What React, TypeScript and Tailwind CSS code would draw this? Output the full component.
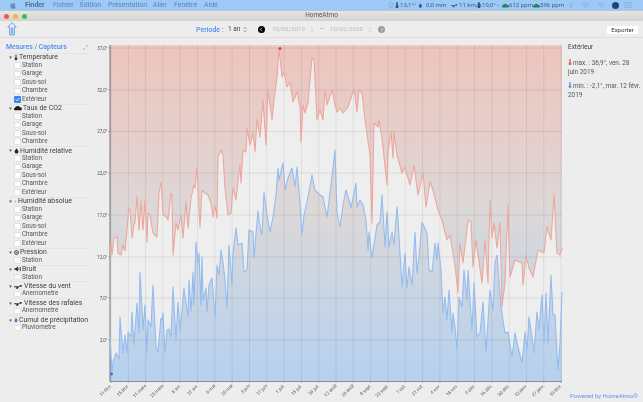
import React from 'react';

const RED = '110,255 111,243 112,255 114,238 117,237 118,253 121,255 123,245 125,251 129,208 130,210 132,238 134,225 135,222 137,196 139,230 141,201 143,230 145,200 147,242 148,213 150,215 153,233 157,237 159,193 161,182 163,215 167,217 168,220 171,193 172,195 173,255 176,223 178,230 181,215 183,238 186,202 188,228 191,198 194,185 195,188 197,167 200,227 202,190 205,193 208,195 211,203 213,217 215,205 217,218 218,157 221,150 223,155 225,188 228,215 231,213 233,188 236,200 239,172 240,165 241,183 243,150 246,152 247,128 250,145 253,133 255,152 257,119 260,137 263,100 266,145 268,90 272,120 274,100 277,77 279,49 282,77 284,72 287,87 290,82 293,102 297,92 300,107 301,142 303,105 305,113 308,103 312,58 314,60 317,120 320,110 323,120 325,90 327,105 332,90 335,105 337,112 340,108 343,113 348,107 352,95 354,89 357,112 359,90 362,93 365,120 370,155 372,223 374,123 378,127 379,120 382,138 387,185 388,152 391,132 393,158 394,132 397,155 402,173 405,167 410,185 414,165 418,195 423,173 426,207 430,182 433,190 438,210 442,220 447,240 450,235 455,265 458,293 460,243 463,263 468,220 471,222 473,267 476,240 482,283 485,240 488,283 490,200 492,238 494,223 497,248 500,222 502,307 505,283 508,205 510,277 515,260 522,263 523,285 526,255 529,268 533,277 538,250 544,253 547,227 551,240 554,194 557,253 560,255 562,248';

const BLUE = '110,337 112,373 113,362 116,353 119,359 120,317 123,353 125,335 127,353 128,332 131,337 132,312 134,345 137,303 139,333 140,272 143,330 145,305 147,353 148,320 151,327 153,285 156,347 158,352 161,318 162,320 163,313 165,353 167,330 169,329 171,337 173,287 176,340 178,302 180,330 183,300 184,288 188,317 189,280 191,312 193,272 194,305 196,242 198,263 199,253 201,305 202,257 203,300 206,288 207,312 209,285 212,278 215,318 217,265 219,275 221,250 223,263 225,280 227,308 229,245 232,285 233,253 236,228 238,245 242,243 244,272 247,270 249,230 253,232 254,258 258,211 260,227 262,235 264,192 267,215 270,232 273,217 276,195 278,168 279,180 283,163 285,190 288,178 292,168 295,187 297,167 300,203 302,235 304,215 307,202 312,175 315,190 320,195 323,197 327,217 331,185 335,150 337,213 340,227 343,205 346,190 349,200 351,208 356,183 357,207 360,200 363,205 366,220 368,250 369,232 372,258 377,225 380,222 382,195 385,247 387,212 389,247 392,232 394,245 397,207 398,220 402,287 405,253 407,288 409,267 412,285 415,232 417,273 419,258 422,222 427,233 429,270 432,272 435,243 437,260 438,243 441,270 443,313 445,297 447,320 449,290 452,332 453,313 455,327 457,350 459,297 462,307 464,270 467,300 468,270 472,330 474,283 477,337 480,333 483,302 486,352 490,290 493,310 495,263 497,255 501,307 505,333 508,332 512,357 515,333 518,347 522,363 525,332 527,350 529,317 532,337 534,353 537,312 539,330 542,295 544,343 546,293 548,343 551,275 553,315 555,315 557,353 558,370 560,342 562,292';

const betweenArea = RED + ' ' + BLUE.split(' ').reverse().join(' ');

const Y_TICKS: [number, string][] = [
  [48, '37,0°'], [90, '32,0°'], [131.5, '27,0°'], [173, '22,0°'],
  [215, '17,0°'], [257, '12,0°'], [298, '7,0°'], [340, '2,0°'],
];

const X_LABELS = [
  '11 févr.', '25 févr.', '11 mars', '25 mars', '8 avr.', '22 avr.', '6 mai', '20 mai', '3 juin',
  '17 juin', '1 juil.', '15 juil.', '29 juil.', '12 août', '26 août', '9 sept.', '23 sept.', '7 oct.',
  '21 oct.', '4 nov.', '18 nov.', '2 déc.', '16 déc.', '30 déc.', '13 janv.', '27 janv.', '10 févr.',
];

type IconName = 'thermo' | 'cloud' | 'drop' | 'vapor' | 'gauge' | 'sound' | 'wind' | 'rain';

const GROUPS: { name: string; icon: IconName; items: string[] }[] = [
  { name: 'Temperature', icon: 'thermo', items: ['Station', 'Garage', 'Sous-sol', 'Chambre', 'Extérieur'] },
  { name: 'Taux de CO2', icon: 'cloud', items: ['Station', 'Garage', 'Sous-sol', 'Chambre'] },
  { name: 'Humidité relative', icon: 'drop', items: ['Station', 'Garage', 'Sous-sol', 'Chambre', 'Extérieur'] },
  { name: 'Humidité absolue', icon: 'vapor', items: ['Station', 'Garage', 'Sous-sol', 'Chambre', 'Extérieur'] },
  { name: 'Pression', icon: 'gauge', items: ['Station'] },
  { name: 'Bruit', icon: 'sound', items: ['Station'] },
  { name: 'Vitesse du vent', icon: 'wind', items: ['Anemometre'] },
  { name: 'Vitesse des rafales', icon: 'wind', items: ['Anemometre'] },
  { name: 'Cumul de précipitation', icon: 'rain', items: ['Pluviometre'] },
];

const GroupIcon = ({ name }: { name: IconName }) => {
  if (name === 'thermo') {
    return (
      <svg viewBox="0 0 6 9" className="w-[4px] h-[7px] shrink-0 mr-[1px]">
        <rect x="2" y="0.5" width="2" height="5" rx="1" fill="none" stroke="#333" strokeWidth="0.8" />
        <circle cx="3" cy="6.6" r="2" fill="#333" />
      </svg>
    );
  }
  if (name === 'cloud') {
    return (
      <svg viewBox="0 0 12 8" className="w-[8px] h-[6px] shrink-0 mr-[1px]">
        <path d="M1 7.5a2 2 0 0 1 .6-3.8A3 3 0 0 1 4 1.5 4 4 0 0 1 9 3a2.4 2.4 0 0 1 1.5 4.5z" fill="#1c1c1c" />
      </svg>
    );
  }
  if (name === 'drop') {
    return (
      <svg viewBox="0 0 8 9" className="w-[5px] h-[6px] shrink-0 mr-[1px]">
        <path d="M4 0C3 2 1 3.500 1 5.500a3 3 0 0 0 6 0C7 3.500 5 2 4 0z" fill="#222" />
      </svg>
    );
  }
  if (name === 'vapor') {
    return (
      <svg viewBox="0 0 6 9" className="w-[3px] h-[6px] shrink-0 mr-[1px]">
        <path d="M3 0.500 1 4h2L2 8l3-5H3.200z" fill="#5ec3ea" />
      </svg>
    );
  }
  if (name === 'gauge') {
    return (
      <svg viewBox="0 0 8 8" className="w-[5px] h-[5px] shrink-0 mr-[1px]">
        <circle cx="4" cy="4" r="3.100" fill="none" stroke="#333" strokeWidth="1.500" />
        <circle cx="4" cy="4" r="1" fill="#333" />
      </svg>
    );
  }
  if (name === 'sound') {
    return (
      <svg viewBox="0 0 10 8" className="w-[7px] h-[6px] shrink-0 mr-[1px]">
        <path d="M0.500 3h2l3-2.500v7L2.500 5h-2z" fill="#222" />
        <rect x="6.500" y="2" width="1" height="4" fill="#222" />
        <rect x="8.500" y="1" width="1" height="6" fill="#222" />
      </svg>
    );
  }
  if (name === 'wind') {
    return (
      <svg viewBox="0 0 14 7" className="w-[9px] h-[5px] shrink-0 mr-[1px]">
        <path d="M0 3h9V1h3v3H8l-2 3H3l1-2.500H0z" fill="#333" />
      </svg>
    );
  }
  return (
    <svg viewBox="0 0 8 10" className="w-[4px] h-[6px] shrink-0 mr-[1px]">
      <path d="M4 0C3 2.500 1 4 1 6.500a3 3 0 0 0 6 0C7 4 5 2.500 4 0z" fill="#2f7fe0" />
    </svg>
  );
};

const Stepper = ({ faded }: { faded?: boolean }) => (
  <svg viewBox="0 0 5 9" className="w-[4px] h-[7px]">
    <path d="M1 3.500 2.500 1.500 4 3.500M1 5.500 2.500 7.500 4 5.500" fill="none" stroke={faded ? '#c2c2c2' : '#666'} strokeWidth="0.7" />
  </svg>
);

const Therm = ({ color }: { color: string }) => (
  <svg viewBox="0 0 6 10" className="inline-block w-[4px] h-[8px] mr-[1px] align-[-1px]">
    <rect x="1.900" y="0.500" width="2.200" height="6" rx="1.100" fill={color} />
    <circle cx="3" cy="7.500" r="2.200" fill={color} />
  </svg>
);

const Cloud = () => (
  <svg viewBox="0 0 12 8" className="w-[7px] h-[5px] shrink-0">
    <path d="M1 7.500a2 2 0 0 1 .6-3.800A3 3 0 0 1 4 1.500 4 4 0 0 1 9 3a2.400 2.400 0 0 1 1.500 4.500z" fill="#1f8a4c" />
  </svg>
);

const Chart = () => (
  <svg viewBox="90 38 476 364" className="w-[476px] h-[364px] shrink-0">
    <defs>
      <linearGradient id="bg" x1="0" y1="0" x2="0" y2="1">
        <stop offset="0" stopColor="#efc4bd" />
        <stop offset="0.5" stopColor="#dcd8d8" />
        <stop offset="1" stopColor="#b5d1ef" />
      </linearGradient>
    </defs>
    <rect x="110" y="45" width="452" height="336" fill="url(#bg)" />
    <rect x="110" y="45" width="452" height="3" fill="#eec8c2" />
    <polygon points={betweenArea} fill="#eeeeee" />
    {Y_TICKS.map(([y, label]) => (
      <g key={label}>
        <line x1="110" x2="562" y1={y} y2={y} stroke="#000" strokeOpacity="0.1" strokeWidth="0.8" />
        <line x1="108" x2="110" y1={y} y2={y} stroke="#888" strokeWidth="0.5" />
        <text x="107.500" y={y + 1.500} textAnchor="end" fontSize="4.600" fill="#555" fontFamily="Roboto, sans-serif">{label}</text>
      </g>
    ))}
    {X_LABELS.map((label, i) => {
      const x = 111 + i * 17.31;
      return (
        <g key={label}>
          <line x1={x} x2={x} y1="45" y2="381" stroke="#000" strokeOpacity="0.09" strokeWidth="0.8" />
          <line x1={x} x2={x} y1="381" y2="383" stroke="#777" strokeWidth="0.5" />
          <text
            x={x + 1}
            y="386"
            textAnchor="end"
            fontSize="4.600"
            fill="#555"
            fontFamily="Roboto, sans-serif"
            transform={`rotate(-45 ${x + 1} 386)`}
          >
            {label}
          </text>
        </g>
      );
    })}
    <line x1="110" x2="110" y1="45" y2="381.500" stroke="#666" strokeWidth="0.9" />
    <line x1="110" x2="562" y1="381.500" y2="381.500" stroke="#777" strokeWidth="0.8" />
    <polyline points={RED} fill="none" stroke="#eda79d" strokeWidth="1.100" strokeLinejoin="round" />
    <polyline points={BLUE} fill="none" stroke="#93bcf0" strokeWidth="1.100" strokeLinejoin="round" />
    <circle cx="280" cy="48.500" r="1.500" fill="#e8413a" />
    <circle cx="111.500" cy="374" r="1.500" fill="#2a7de8" />
  </svg>
);

export default function App() {
  return (
    <div className="w-[643px] h-[402px] overflow-hidden flex flex-col bg-[#ededed] text-[#444] blur-[0.3px] font-['Roboto',sans-serif]">
      {/* Menu bar */}
      <div className="h-[10px] shrink-0 bg-[#9dc9f6] flex items-center text-[6.900px] text-[#5e83ae] relative whitespace-nowrap">
        <svg viewBox="0 0 10 12" className="w-[6px] h-[7px] ml-[10px] mr-[9px]">
          <path d="M7 0.500C6 .6 5 1.500 5.200 2.700 6.300 2.700 7.200 1.700 7 .5zM5 3.200C4 3.200 3.500 2.600 2.600 2.600 1.300 2.700 .3 4 .3 6c0 2.700 1.800 5.500 3 5.500.8 0 1-.5 1.900-.5s1.100.5 1.900.5c1 0 2-1.700 2.500-3.100C8 7.700 7.600 5 9.300 4c-.6-1-1.600-1.400-2.400-1.400C6 2.600 5.500 3.200 5 3.200z" fill="#6c8eb6" />
        </svg>
        <span className="font-bold text-[#4f7097] w-[28px]">Finder</span>
        <span className="w-[27px]">Fichier</span>
        <span className="w-[28px]">Édition</span>
        <span className="w-[45px]">Présentation</span>
        <span className="w-[21px]">Aller</span>
        <span className="w-[30px]">Fenêtre</span>
        <span>Aide</span>
        <div className="ml-auto flex items-center h-full pr-[11px] text-[6.100px] text-[#3f5f86]">
          <svg viewBox="0 0 8 10" className="w-[6px] h-[8px] mr-[1px]">
            <path d="M4 .5 7 4H5.500v5h-3V4H1z" fill="none" stroke="#7ba6d6" strokeWidth="0.800" />
          </svg>
          <Therm color="#2c4a6d" />
          <span className="w-[13px]">13,1°</span>
          <span className="w-[5px] text-[#c9445a] text-[4px]">↗</span>
          <svg viewBox="0 0 8 8" className="w-[6px] h-[5px] mr-[2px]">
            <path d="M3 0C2 2 .5 3.500.5 5a2.500 2.500 0 0 0 5 0C5.500 3.500 4 2 3 0z" fill="#2c5fa8" />
          </svg>
          <span className="w-[25px]">0,0 mm</span>
          <svg viewBox="0 0 14 7" className="w-[7px] h-[5px] mr-[1px] shrink-0">
            <path d="M0 3h9V1h3v3H8l-2 3H3l1-2.500H0z" fill="#33517a" />
          </svg>
          <span className="w-[18px]">11 km/h</span>
          <Therm color="#2c4a6d" />
          <span className="w-[14px]">19,0°</span>
          <span className="w-[6px] text-[4px]">→</span>
          <Cloud />
          <span className="w-[24px]">612 ppm</span>
          <Cloud />
          <span className="w-[22px] mr-[6px]">596 ppm</span>
          <svg viewBox="0 0 8 10" className="w-[6px] h-[7px] mr-[7px]">
            <path d="M1 3 6 7 4 9V1L6 3 1 7" fill="none" stroke="#86aad3" strokeWidth="0.800" />
          </svg>
          <svg viewBox="0 0 12 9" className="w-[9px] h-[7px] mr-[8px]">
            <path d="M.5 3a8 8 0 0 1 11 0M2.500 5a5 5 0 0 1 7 0M4.500 7a2.200 2.200 0 0 1 3 0" fill="none" stroke="#86aad3" strokeWidth="1" />
          </svg>
          <svg viewBox="0 0 10 10" className="w-[6px] h-[6px] mr-[8px]">
            <circle cx="4" cy="4" r="3" fill="none" stroke="#86aad3" strokeWidth="1.200" />
            <path d="M6.500 6.500 9.500 9.500" stroke="#86aad3" strokeWidth="1.200" />
          </svg>
          <div className="w-[7px] h-[7px] rounded-full bg-[#23407e] mr-[5px]" />
          <svg viewBox="0 0 10 8" className="w-[8px] h-[6px]">
            <path d="M0 1h10M0 4h10M0 7h10" stroke="#86aad3" strokeWidth="1" />
          </svg>
        </div>
      </div>

      {/* Title bar */}
      <div className="h-[11px] shrink-0 bg-gradient-to-b from-[#e6e6e6] to-[#d2d2d2] flex items-center relative pl-[4px] gap-[4px] border-t border-[#b9c4cf]">
        <div className="w-[5px] h-[5px] rounded-full bg-[#f0584f]" />
        <div className="w-[5px] h-[5px] rounded-full bg-[#f5b82e]" />
        <div className="w-[5px] h-[5px] rounded-full bg-[#38c146]" />
        <span className="absolute left-0 right-0 text-center text-[6.400px] text-[#555]">HomeAtmo</span>
      </div>

      {/* Toolbar */}
      <div className="h-[17px] shrink-0 flex items-center border-b border-[#dedede] relative text-[6.500px] whitespace-nowrap">
        <svg viewBox="0 0 10 14" className="w-[10px] h-[14px] ml-[7px] mr-[179px]">
          <path d="M5 .6 9.300 5H7.400v8H2.600V5H.7zM4.300 5.500v6.500M5.700 5.500v6.500" fill="none" stroke="#5b9be8" strokeWidth="0.900" />
        </svg>
        <span className="text-[#4f8df0] font-medium text-[7px] w-[32px] mt-[2px]">Periode :</span>
        <span className="w-[15px] text-[#444] mt-[2px]">1 an</span>
        <Stepper />
        <div className="w-[7px] h-[7px] rounded-full bg-black flex items-center justify-center ml-[11px] mr-[7px] mt-[1px]">
          <svg viewBox="0 0 6 6" className="w-[5px] h-[5px]">
            <path d="M3.500 1 1.500 3l2 2" fill="none" stroke="#fff" strokeWidth="1" />
          </svg>
        </div>
        <span className="w-[38px] text-[#b9b9b9] text-[6.200px] mt-[2px]">10/02/2019</span>
        <Stepper faded />
        <span className="w-[16px] text-center text-[#999] mt-[2px]">–</span>
        <span className="w-[38px] text-[#b9b9b9] text-[6.200px] mt-[2px]">10/02/2020</span>
        <Stepper faded />
        <div className="w-[7px] h-[7px] rounded-full bg-[#9c9c9c] flex items-center justify-center ml-[6px] mt-[1px]">
          <svg viewBox="0 0 6 6" className="w-[5px] h-[5px]">
            <path d="M2.500 1l2 2-2 2" fill="none" stroke="#eee" strokeWidth="1" />
          </svg>
        </div>
        <button className="ml-auto mr-[5px] w-[31px] h-[8px] bg-white rounded-[1px] text-[6px] leading-[8px] text-[#333] text-center mt-[1px]">Exporter</button>
      </div>

      {/* Body */}
      <div className="flex-1 flex min-h-0">
        <aside className="w-[90px] shrink-0 pt-[4px]">
          <div className="h-[10.800px] pl-[6px] pr-[2px] flex items-center justify-between">
            <span className="text-[#4f8df0] font-medium text-[6.900px] whitespace-nowrap">Mesures / Capteurs</span>
            <svg viewBox="0 0 8 8" className="w-[5px] h-[5px]">
              <path d="M1 5v2h2M1 7l2-2M7 3V1H5M7 1 5 3" fill="none" stroke="#888" strokeWidth="0.600" />
            </svg>
          </div>
          {GROUPS.map(group => (
            <div key={group.name}>
              <div className="h-[8.470px] ml-[9px] mr-[2px] border-t border-[#e4e4e4] flex items-center text-[6.900px] text-[#3d3d3d] whitespace-nowrap">
                <svg viewBox="0 0 6 6" className="w-[3px] h-[3px] mr-[2px] shrink-0">
                  <path d="M0 1h6L3 6z" fill="#666" />
                </svg>
                <GroupIcon name={group.icon} />
                <span>{group.name}</span>
              </div>
              {group.items.map(item => {
                const checked = group.name === 'Temperature' && item === 'Extérieur';
                return (
                  <div key={item} className="h-[8.470px] pl-[14px] flex items-center text-[6.300px] text-[#555]">
                    {checked ? (
                      <div className="w-[6.500px] h-[6.500px] rounded-[1px] bg-[#3f88ee] flex items-center justify-center mr-[1.500px]">
                        <svg viewBox="0 0 6 6" className="w-[5px] h-[5px]">
                          <path d="M1 3l1.400 1.500L5 1.500" fill="none" stroke="#fff" strokeWidth="1" />
                        </svg>
                      </div>
                    ) : (
                      <div className="w-[6.500px] h-[6.500px] rounded-[1px] bg-white border-[0.5px] border-[#e2e2e2] mr-[1.500px]" />
                    )}
                    <span>{item}</span>
                  </div>
                );
              })}
            </div>
          ))}
        </aside>

        <Chart />

        <aside className="flex-1 relative pl-[2px] pt-[5px] text-[6.400px] leading-[9px] text-[#555] whitespace-nowrap">
          <div className="mb-[6px] text-[#444]">Extérieur</div>
          <div className="mb-[4px]"><Therm color="#ea5f55" />max. : 36,9°, ven. 28<br />juin 2019</div>
          <div><Therm color="#5b9be8" />min. : -2,1°, mar. 12 févr.<br />2019</div>
          <div className="absolute right-[5px] bottom-[2px] text-[#5d97ee] text-[6px]">Powered by HomeAtmo©</div>
        </aside>
      </div>
    </div>
  );
}
